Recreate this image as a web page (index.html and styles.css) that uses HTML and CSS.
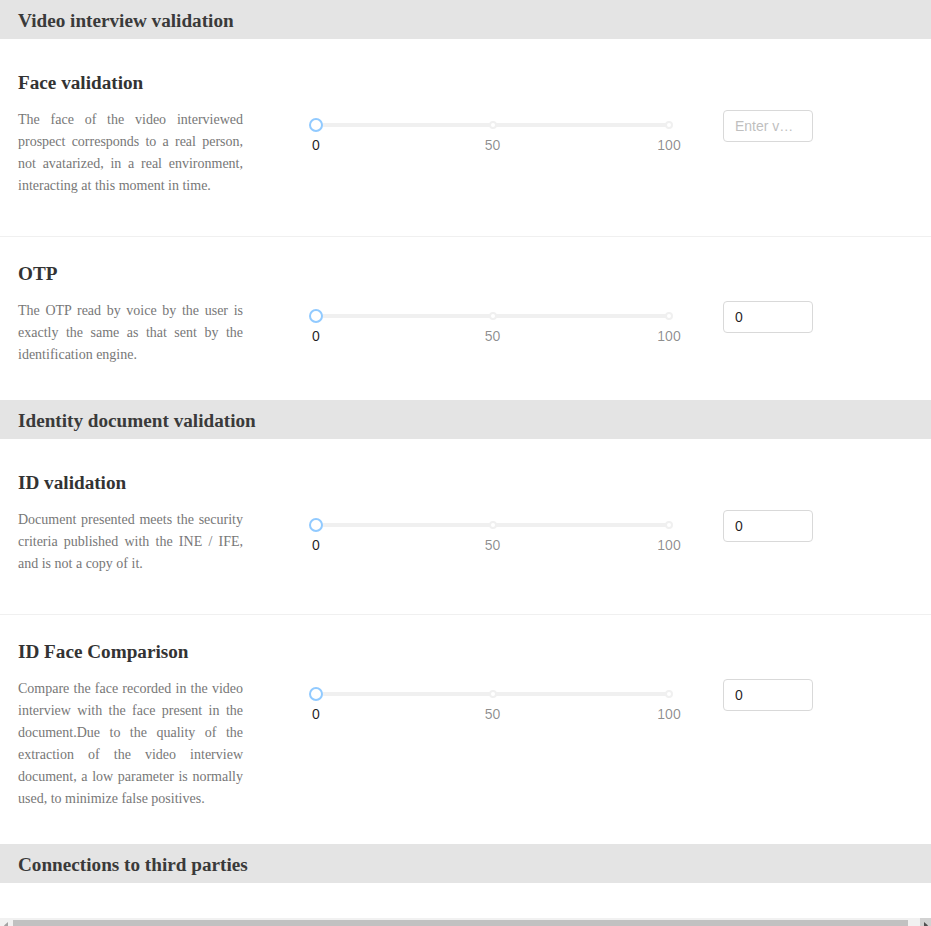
FILE: index.html
```html
<!DOCTYPE html>
<html lang="en">
<head>
<meta charset="utf-8">
<title>Validation settings</title>
<link rel="stylesheet" href="styles.css">
</head>
<body>
<div class="page">
  <div class="content">
    <section class="section">
      <h2 class="section-header">Video interview validation</h2>
      <div class="item">
        <h3 class="item-title">Face validation</h3>
        <div class="row">
          <p class="desc">The face of the video interviewed prospect corresponds to a real person, not avatarized, in a real environment, interacting at this moment in time.</p>
          <div class="slider">
            <div class="track"></div>
            <span class="dot dot-mid"></span>
            <span class="dot dot-end"></span>
            <span class="handle"></span>
            <span class="mark mark-start active">0</span>
            <span class="mark mark-mid">50</span>
            <span class="mark mark-end">100</span>
          </div>
          <input class="num" type="text" placeholder="Enter value">
        </div>
      </div>
      <hr class="divider">
      <div class="item">
        <h3 class="item-title">OTP</h3>
        <div class="row">
          <p class="desc">The OTP read by voice by the user is exactly the same as that sent by the identification engine.</p>
          <div class="slider">
            <div class="track"></div>
            <span class="dot dot-mid"></span>
            <span class="dot dot-end"></span>
            <span class="handle"></span>
            <span class="mark mark-start active">0</span>
            <span class="mark mark-mid">50</span>
            <span class="mark mark-end">100</span>
          </div>
          <input class="num" type="text" value="0">
        </div>
      </div>
    </section>

    <section class="section">
      <h2 class="section-header">Identity document validation</h2>
      <div class="item">
        <h3 class="item-title">ID validation</h3>
        <div class="row">
          <p class="desc">Document presented meets the security criteria published with the INE / IFE, and is not a copy of it.</p>
          <div class="slider">
            <div class="track"></div>
            <span class="dot dot-mid"></span>
            <span class="dot dot-end"></span>
            <span class="handle"></span>
            <span class="mark mark-start active">0</span>
            <span class="mark mark-mid">50</span>
            <span class="mark mark-end">100</span>
          </div>
          <input class="num" type="text" value="0">
        </div>
      </div>
      <hr class="divider">
      <div class="item">
        <h3 class="item-title">ID Face Comparison</h3>
        <div class="row">
          <p class="desc">Compare the face recorded in the video interview with the face present in the document.Due to the quality of the extraction of the video interview document, a low parameter is normally used, to minimize false positives.</p>
          <div class="slider">
            <div class="track"></div>
            <span class="dot dot-mid"></span>
            <span class="dot dot-end"></span>
            <span class="handle"></span>
            <span class="mark mark-start active">0</span>
            <span class="mark mark-mid">50</span>
            <span class="mark mark-end">100</span>
          </div>
          <input class="num" type="text" value="0">
        </div>
      </div>
    </section>

    <section class="section">
      <h2 class="section-header">Connections to third parties</h2>
      <div class="section-body"></div>
    </section>
  </div>
  <div class="hscroll" aria-hidden="true">
    <span class="sb-btn sb-left">
      <svg width="15" height="15" viewBox="0 0 15 15"><path d="M9 4 L5 7.5 L9 11 Z" fill="#a3a3a3"/></svg>
    </span>
    <span class="sb-thumb"></span>
    <span class="sb-gap"></span>
    <span class="sb-btn sb-right">
      <svg width="15" height="15" viewBox="0 0 15 15"><path d="M6 4 L10 7.5 L6 11 Z" fill="#505050"/></svg>
    </span>
  </div>
</div>
</body>
</html>
```
FILE: styles.css
```css
html, body {
  margin: 0;
  padding: 0;
}
body {
  overflow: hidden;
  background: #ffffff;
  font-family: "Liberation Serif", "Times New Roman", serif;
  color: #333333;
}
.section-header {
  margin: 0 0 7px 0;
  padding: 9px 18px 6px;
  background: #e4e4e4;
  font-size: 19.2px;
  line-height: 24px;
  font-weight: bold;
  color: #3a3a3a;
}
.item {
  padding: 25px 0 34px 18px;
}
.item-title {
  margin: 0 0 14px 0;
  font-size: 19.2px;
  line-height: 24px;
  font-weight: bold;
  color: #333333;
}
.row {
  display: flex;
  align-items: flex-start;
}
.desc {
  width: 225px;
  margin: 0;
  font-size: 14px;
  line-height: 22px;
  text-align: justify;
  color: #777777;
}
.slider {
  position: relative;
  width: 353px;
  height: 44px;
  margin-left: 73px;
  flex: none;
}
.track {
  position: absolute;
  left: 0;
  right: 0;
  top: 14px;
  height: 4px;
  border-radius: 2px;
  background: #f0f0f0;
}
.dot {
  position: absolute;
  top: 12px;
  width: 8px;
  height: 8px;
  margin-left: -4px;
  box-sizing: border-box;
  border: 2px solid #f0f0f0;
  border-radius: 50%;
  background: #ffffff;
}
.dot-mid { left: 50%; }
.dot-end { left: 100%; }
.handle {
  position: absolute;
  left: 0;
  top: 9px;
  width: 14px;
  height: 14px;
  margin-left: -7px;
  box-sizing: border-box;
  border: 2px solid #91caff;
  border-radius: 50%;
  background: #ffffff;
}
.mark {
  position: absolute;
  top: 28px;
  transform: translateX(-50%);
  font-family: "Liberation Sans", Arial, sans-serif;
  font-size: 14px;
  line-height: 16px;
  color: rgba(0, 0, 0, 0.45);
  white-space: nowrap;
}
.mark.active { color: rgba(0, 0, 0, 0.88); }
.mark-start { left: 0; }
.mark-mid { left: 50%; }
.mark-end { left: 100%; }
.num {
  flex: none;
  width: 90px;
  height: 32px;
  box-sizing: border-box;
  margin: 1px 0 0 54px;
  padding: 4px 11px;
  border: 1px solid #d9d9d9;
  border-radius: 4px;
  background: #ffffff;
  font-family: "Liberation Sans", Arial, sans-serif;
  font-size: 14px;
  line-height: 22px;
  color: rgba(0, 0, 0, 0.88);
  text-overflow: ellipsis;
  outline: none;
}
.num::placeholder {
  color: #bfbfbf;
}
.divider {
  margin: 5px 0 0 0;
  border: 0;
  border-top: 1px solid #f0f0f0;
  height: 0;
}
.section-body {
  height: 28px;
}
.hscroll {
  display: flex;
  height: 15px;
  background: #f1f1f1;
}
.sb-btn {
  flex: none;
  display: flex;
  width: 12px;
  overflow: hidden;
  justify-content: center;
}
.sb-btn svg {
  flex: none;
}
.sb-left {
  background: #f1f1f1;
}
.sb-right {
  width: 11px;
  background: #d2d2d2;
}
.sb-thumb {
  flex: 1;
  margin: 2px 0 2px 1px;
  background: #c1c1c1;
}
.sb-gap {
  flex: none;
  width: 12px;
}
```
